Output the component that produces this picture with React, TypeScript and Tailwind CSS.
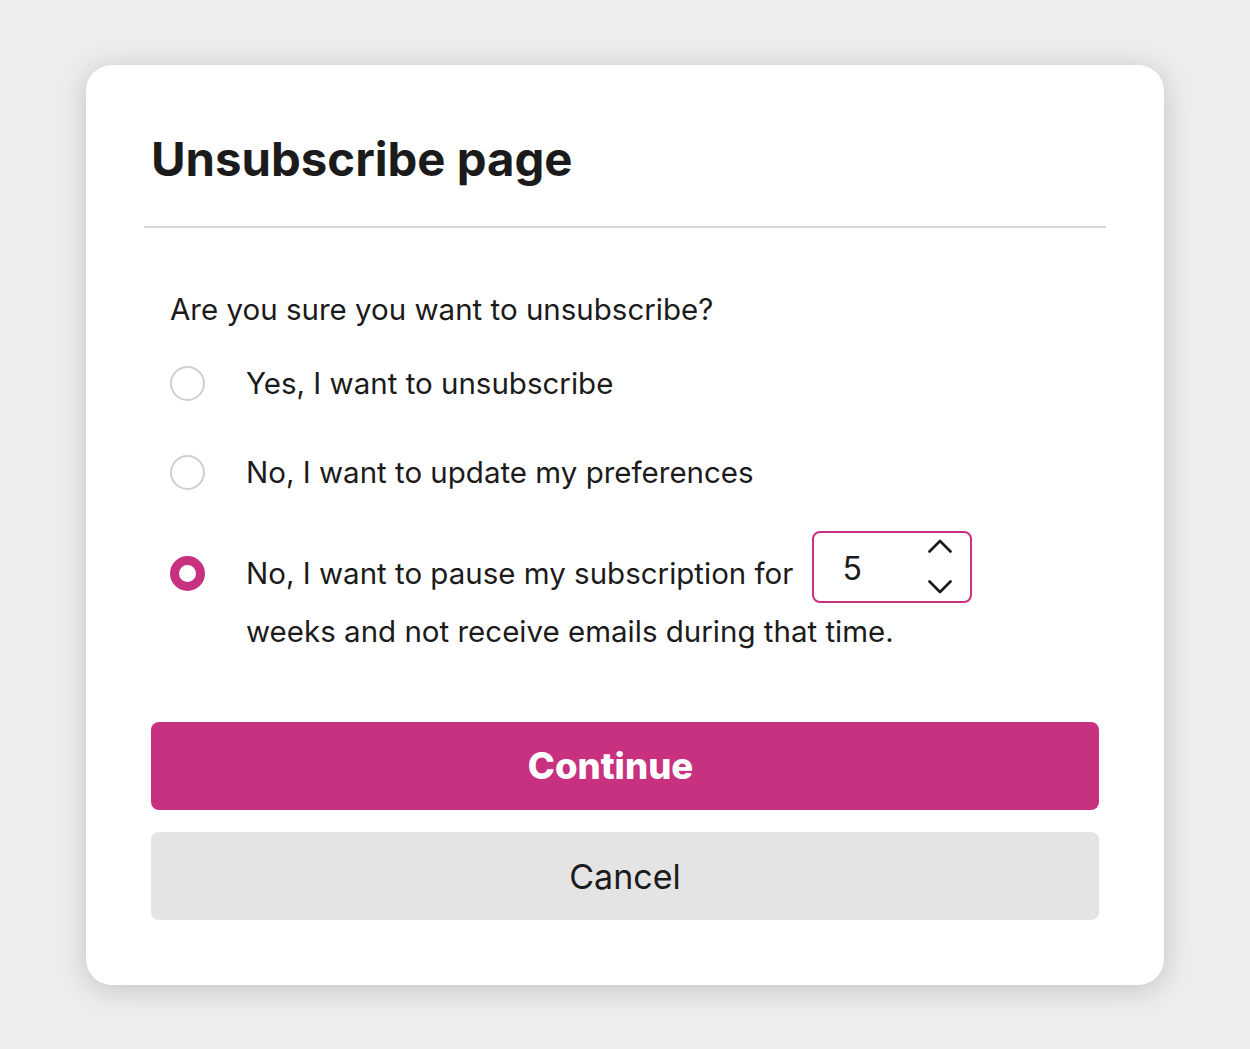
import { useState } from 'react';

const PINK = 'bg-[#c7317f]';

function Radio({ checked }: { checked: boolean }) {
  return checked ? (
    <span className="block h-[35px] w-[35px] shrink-0 rounded-full border-[9px] border-[#c7317f] bg-white" />
  ) : (
    <span className="block h-[35px] w-[35px] shrink-0 rounded-full border-2 border-[#cfcfcf] bg-white" />
  );
}

function Chevron({ up }: { up?: boolean }) {
  return (
    <svg width="24" height="14" viewBox="0 0 24 14" fill="none">
      <path
        d={up ? 'M1.5 12.5 L12 2 L22.5 12.5' : 'M1.5 1.5 L12 12 L22.5 1.5'}
        stroke="#1b1b1b"
        strokeWidth="2.7"
        strokeLinecap="round"
        strokeLinejoin="round"
      />
    </svg>
  );
}

export default function App() {
  const [weeks] = useState(5);

  return (
    <div className="flex min-h-[1049px] items-start justify-center bg-[#ededed] pt-[65px] font-['Inter',sans-serif] text-[#1b1b1b]">
      <div className="w-[1078px] rounded-[26px] bg-white px-[65px] pb-[65px] pt-[66px] shadow-[0_4px_28px_rgba(0,0,0,0.18)]">
        <h1 className="text-[47.3px] font-bold leading-[56px]">Unsubscribe page</h1>
        <div className="-mx-[7px] mt-[39px] h-[2px] bg-[#d6d6d6]" />

        <div className="pl-[19px] pt-[63px] text-[29.5px] leading-[36px]">
          <p>Are you sure you want to unsubscribe?</p>

          <div className="mt-[38px] flex items-center gap-[41px]">
            <Radio checked={false} />
            <span>Yes, I want to unsubscribe</span>
          </div>

          <div className="mt-[53px] flex items-center gap-[41px]">
            <Radio checked={false} />
            <span>No, I want to update my preferences</span>
          </div>

          <div className="mt-[41px] flex items-start gap-[41px]">
            <div className="mt-[24.5px]">
              <Radio checked />
            </div>
            <div>
              <div className="flex items-start gap-[19px]">
                <span className="mt-[24px]">No, I want to pause my subscription for</span>
                <div className="flex h-[72px] w-[160px] items-center justify-between rounded-[8px] border-2 border-[#c7317f] pl-[28px] pr-[18px]">
                  <span className="mt-[4px] text-[32px]">{weeks}</span>
                  <div className="flex h-full flex-col justify-between pb-[7px] pt-[6px]">
                    <Chevron up />
                    <Chevron />
                  </div>
                </div>
              </div>
              <p className="mt-[10px]">weeks and not receive emails during that time.</p>
            </div>
          </div>
        </div>

        <div className="mt-[73px] flex flex-col gap-[22px]">
          <button className={`h-[88px] w-full rounded-[8px] ${PINK} pr-[29px] text-[36.5px] font-extrabold text-white`}>
            Continue
          </button>
          <button className="h-[88px] w-full rounded-[8px] bg-[#e4e4e4] text-[34px] text-[#1b1b1b]">
            Cancel
          </button>
        </div>
      </div>
    </div>
  );
}
